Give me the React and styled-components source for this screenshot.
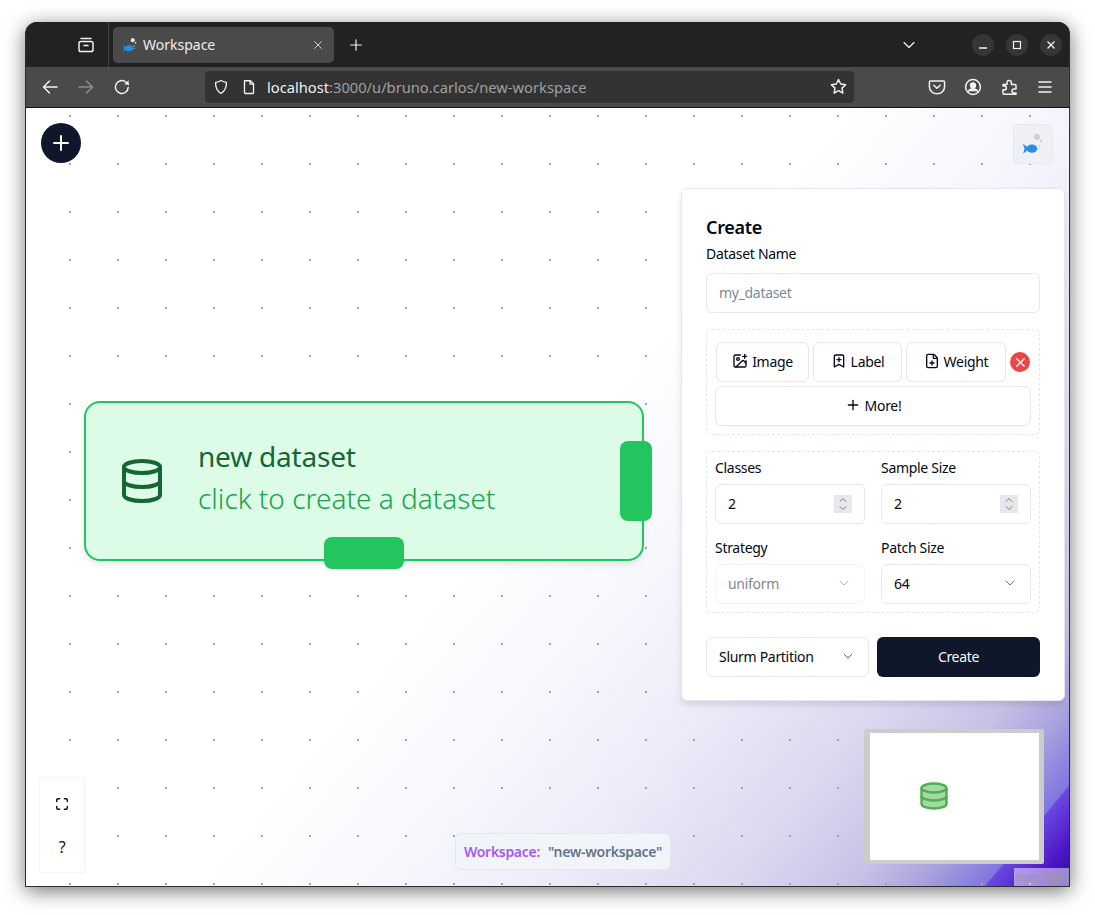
import styled, { createGlobalStyle } from "styled-components";
import {
  BookmarkPlus,
  ChevronDown,
  ChevronUp,
  Database,
  FilePlus,
  ImagePlus,
  Maximize,
  Plus,
  X,
} from "lucide-react";

const font = `"Noto Sans", "Open Sans", sans-serif`;

const GlobalStyle = createGlobalStyle`
  html, body {
    margin: 0;
    min-height: 915px;
    background: #ffffff;
    font-family: ${font};
  }
  * {
    box-sizing: border-box;
  }
  input, button {
    letter-spacing: inherit;
  }
`;

function Fish({ size = 24, bubbles = "#cbd0d8" }) {
  return (
    <svg width={size} height={size} viewBox="0 0 24 24">
      <path d="M2.500 11.500 L7 15 L7 17.500 L3 21 L4.200 16.200 Z" fill="#2a8be8" />
      <ellipse cx="11" cy="16.200" rx="5" ry="3.800" fill="#2a8be8" />
      <circle cx="15.700" cy="5.500" r="2.700" fill={bubbles} />
      <circle cx="19.400" cy="9.200" r="1.100" fill={bubbles} />
      <circle cx="17.500" cy="13.600" r="0.800" fill={bubbles} />
      <circle cx="17.500" cy="16.600" r="0.700" fill={bubbles} />
    </svg>
  );
}

function ChromeIcon({ children, size = 20 }) {
  return (
    <svg
      width={size}
      height={size}
      viewBox="0 0 20 20"
      fill="none"
      stroke="currentColor"
      strokeWidth="1.5"
      strokeLinecap="round"
      strokeLinejoin="round"
    >
      {children}
    </svg>
  );
}

function SelectBox({ value, disabled, width }) {
  return (
    <SelectField $disabled={disabled} $width={width}>
      <span>{value}</span>
      <ChevronDown size={16} strokeWidth={1.5} />
    </SelectField>
  );
}

function NumberBox({ value }) {
  return (
    <NumberWrap>
      <NumberInput type="number" defaultValue={value} />
      <Spinner>
        <ChevronUp size={12} strokeWidth={1.8} />
        <ChevronDown size={12} strokeWidth={1.8} />
      </Spinner>
    </NumberWrap>
  );
}

export default function App() {
  return (
    <>
      <GlobalStyle />
      <Window>
        <TitleBar>
          <ArchiveSlot>
            <ChromeIcon>
              <rect x="3" y="6.5" width="14" height="10" rx="1.8" />
              <path d="M5 3.5h10M8 10.5h4" />
            </ChromeIcon>
          </ArchiveSlot>
          <Tab>
            <Fish size={18} bubbles="#e4e4e4" />
            <TabTitle>Workspace</TabTitle>
            <TabClose>
              <X size={14} strokeWidth={1.4} />
            </TabClose>
          </Tab>
          <NewTab>
            <Plus size={18} strokeWidth={1.6} />
          </NewTab>
          <TabListButton>
            <ChevronDown size={20} strokeWidth={1.4} />
          </TabListButton>
          <WindowButtons>
            <WindowButton>
              <svg width="10" height="10" viewBox="0 0 10 10">
                <path d="M1 8h8" stroke="currentColor" strokeWidth="1.3" />
              </svg>
            </WindowButton>
            <WindowButton>
              <svg width="10" height="10" viewBox="0 0 10 10">
                <rect x="1.5" y="1.5" width="7" height="7" fill="none" stroke="currentColor" strokeWidth="1.2" />
              </svg>
            </WindowButton>
            <WindowButton>
              <svg width="10" height="10" viewBox="0 0 10 10">
                <path d="M1.5 1.5l7 7M8.5 1.5l-7 7" stroke="currentColor" strokeWidth="1.3" />
              </svg>
            </WindowButton>
          </WindowButtons>
        </TitleBar>

        <NavBar>
          <NavButtons>
            <NavIcon>
              <ChromeIcon>
                <path d="M17 10H3.500M9.500 4l-6 6 6 6" />
              </ChromeIcon>
            </NavIcon>
            <NavIcon $dim>
              <ChromeIcon>
                <path d="M3 10h13.500M10.500 4l6 6-6 6" />
              </ChromeIcon>
            </NavIcon>
            <NavIcon>
              <ChromeIcon>
                <path d="M16.200 10.400A6.400 6.400 0 1 1 14 5.200L16.400 7.400" />
                <path d="M16.600 3.200v4.400h-4.400" fill="currentColor" stroke="none" />
              </ChromeIcon>
            </NavIcon>
          </NavButtons>
          <UrlBar>
            <ChromeIcon size={18}>
              <path d="M10 2.800c2 1.200 4 1.800 6 2 .2 5.600-1.800 10-6 12.400-4.200-2.400-6.200-6.800-6-12.400 2-.2 4-.8 6-2z" />
            </ChromeIcon>
            <ChromeIcon size={18}>
              <path d="M5 3h6.500L15 6.500V16a1.200 1.200 0 0 1-1.200 1.200H6.200A1.200 1.200 0 0 1 5 16z" />
              <path d="M11.200 3v3.800H15" />
            </ChromeIcon>
            <UrlText>
              <UrlHost>localhost</UrlHost>:3000/u/bruno.carlos/new-workspace
            </UrlText>
            <ChromeIcon size={19}>
              <path d="M10 2.600l2.300 4.800 5.200.7-3.800 3.600.9 5.200L10 14.400l-4.600 2.500.9-5.200-3.800-3.600 5.200-.7z" />
            </ChromeIcon>
          </UrlBar>
          <ToolIcons>
            <NavIcon>
              <ChromeIcon>
                <path d="M3.400 4h13.200c.6 0 1 .4 1 1v4.400c0 4.400-3.400 7.400-7.600 7.400S2.400 13.800 2.400 9.400V5c0-.6.4-1 1-1z" />
                <path d="M6.800 8.200L10 11.200l3.200-3" />
              </ChromeIcon>
            </NavIcon>
            <NavIcon>
              <ChromeIcon>
                <circle cx="10" cy="10" r="7.400" />
                <circle cx="10" cy="8.400" r="2.400" fill="currentColor" />
                <path d="M5.200 14.200c1.200-1.800 2.800-2.400 4.800-2.400s3.600.6 4.800 2.400" fill="currentColor" />
              </ChromeIcon>
            </NavIcon>
            <ExtensionIcon>
              <ChromeIcon>
                <path d="M3 7.400h4V5.600a2.200 2.200 0 0 1 4.400 0v1.800h3.600c.6 0 1 .4 1 1V12h-2a2 2 0 0 0 0 4h2v1.200H4c-.6 0-1-.4-1-1v-3.400h1.400a1.900 1.900 0 0 0 0-3.800H3z" />
              </ChromeIcon>
            </ExtensionIcon>
            <NavIcon>
              <ChromeIcon>
                <path d="M4 5h12M4 10h12M4 15h12" />
              </ChromeIcon>
            </NavIcon>
          </ToolIcons>
        </NavBar>

        <Canvas>
          <AddButton>
            <Plus size={24} strokeWidth={2} />
          </AddButton>
          <LogoTile>
            <Fish size={26} />
          </LogoTile>

          <DatasetNode>
            <Database size={48} strokeWidth={2} color="#166534" />
            <NodeText>
              <NodeTitle>new dataset</NodeTitle>
              <NodeSubtitle>click to create a dataset</NodeSubtitle>
            </NodeText>
            <RightHandle />
            <BottomHandle />
          </DatasetNode>

          <Panel>
            <PanelTitle>Create</PanelTitle>
            <NameLabel>Dataset Name</NameLabel>
            <NameInput placeholder="my_dataset" />

            <ColumnsBox>
              <ColumnRow>
                <OutlineButton $width={93}>
                  <ImagePlus size={16} strokeWidth={2} />
                  Image
                </OutlineButton>
                <OutlineButton $width={89}>
                  <BookmarkPlus size={16} strokeWidth={2} />
                  Label
                </OutlineButton>
                <OutlineButton $width={100}>
                  <FilePlus size={16} strokeWidth={2} />
                  Weight
                </OutlineButton>
                <RemoveButton>
                  <X size={15} strokeWidth={2} />
                </RemoveButton>
              </ColumnRow>
              <MoreButton>
                <Plus size={16} strokeWidth={2} />
                More!
              </MoreButton>
            </ColumnsBox>

            <OptionsBox>
              <Option>
                <FieldLabel>Classes</FieldLabel>
                <NumberBox value={2} />
              </Option>
              <Option>
                <FieldLabel>Sample Size</FieldLabel>
                <NumberBox value={2} />
              </Option>
              <Option>
                <FieldLabel>Strategy</FieldLabel>
                <SelectBox value="uniform" disabled />
              </Option>
              <Option>
                <FieldLabel>Patch Size</FieldLabel>
                <SelectBox value="64" />
              </Option>
            </OptionsBox>

            <ActionRow>
              <SelectBox value="Slurm Partition" width={163} />
              <CreateButton>Create</CreateButton>
            </ActionRow>
          </Panel>

          <Controls>
            <ControlButton>
              <Maximize size={14} strokeWidth={2.4} color="#111111" />
            </ControlButton>
            <ControlButton>?</ControlButton>
          </Controls>

          <WorkspaceTag>
            <TagKey>Workspace:</TagKey>
            <TagValue>"new-workspace"</TagValue>
          </WorkspaceTag>

          <MiniMap>
            <MiniView>
              <svg width="30" height="32" viewBox="0 0 30 32">
                <ellipse cx="15" cy="8" rx="12.500" ry="4.500" fill="#a6d8a6" />
                <path d="M2.500 8v16c0 2.500 5.600 4.500 12.500 4.500s12.500-2 12.500-4.500V8z" fill="#a6d8a6" />
                <g fill="none" stroke="#4caf50" strokeWidth="2.400">
                  <ellipse cx="15" cy="8" rx="12.500" ry="4.500" />
                  <path d="M2.500 8v16c0 2.500 5.600 4.500 12.500 4.500s12.500-2 12.500-4.500V8" />
                  <path d="M2.500 16c0 2.500 5.600 4.500 12.500 4.500s12.500-2 12.500-4.500" />
                </g>
              </svg>
            </MiniView>
          </MiniMap>
          <Attribution>React Flow</Attribution>
        </Canvas>
      </Window>
    </>
  );
}

const Window = styled.div`
  display: flex;
  flex-direction: column;
  width: 1045px;
  height: 865px;
  margin: 22px 0 0 25px;
  overflow: hidden;
  border-radius: 12px 12px 0 0;
  border: 1px solid #2e2e2e;
  border-top: none;
  background: #222222;
  box-shadow: 0 4px 20px rgba(0, 0, 0, 0.55);
`;

const TitleBar = styled.div`
  display: flex;
  align-items: center;
  flex: 0 0 45px;
  color: #f2f2f2;
  background: #222222;
`;

const ArchiveSlot = styled.div`
  display: flex;
  align-items: center;
  justify-content: center;
  width: 83px;
  height: 45px;
  padding-left: 37px;
  border-right: 1px solid #444444;
`;

const Tab = styled.div`
  display: flex;
  align-items: center;
  width: 221px;
  height: 36px;
  margin-left: 4px;
  padding: 0 9px 0 8px;
  border-radius: 5px;
  background: #4a4a4a;
`;

const TabTitle = styled.span`
  flex: 1;
  margin-left: 4px;
  font-size: 14px;
  color: #eeeeee;
`;

const TabClose = styled.span`
  display: flex;
  color: #e8e8e8;
`;

const NewTab = styled.div`
  display: flex;
  margin-left: 13px;
`;

const TabListButton = styled.div`
  display: flex;
  margin-left: 534px;
`;

const WindowButtons = styled.div`
  display: flex;
  gap: 12px;
  margin-left: 53px;
`;

const WindowButton = styled.div`
  display: flex;
  align-items: center;
  justify-content: center;
  width: 22px;
  height: 22px;
  border-radius: 50%;
  color: #f2f2f2;
  background: #363636;
`;

const NavBar = styled.div`
  display: flex;
  align-items: center;
  flex: 0 0 41px;
  padding-bottom: 1px;
  color: #f2f2f2;
  background: #4a4a4a;
  border-bottom: 1px solid #111111;
`;

const NavButtons = styled.div`
  display: flex;
  gap: 16px;
  width: 179px;
  padding-left: 14px;
`;

const NavIcon = styled.div`
  display: flex;
  opacity: ${(props) => (props.$dim ? 0.4 : 1)};
`;

const ExtensionIcon = styled(NavIcon)`
  margin-left: 1px;
  margin-right: -1px;
`;

const UrlBar = styled.div`
  display: flex;
  align-items: center;
  gap: 10px;
  width: 649px;
  height: 32px;
  padding: 0 6px 0 7px;
  border-radius: 4px;
  background: #333333;
`;

const UrlText = styled.span`
  flex: 1;
  margin-left: -1px;
  font-size: 14.7px;
  color: #a0a0a0;
`;

const UrlHost = styled.span`
  color: #f0f0f0;
`;

const ToolIcons = styled.div`
  display: flex;
  gap: 16px;
  margin-left: 73px;
`;

const Canvas = styled.div`
  position: relative;
  flex: 1;
  color: #020817;
  letter-spacing: -0.3px;
  background-color: #ffffff;
  background-image: radial-gradient(circle, #a4a4a4 1px, transparent 1.3px),
    linear-gradient(
      130deg,
      #ffffff 48%,
      #f6f6fd 60%,
      #eceaf8 70%,
      #dcd8f0 80%,
      #c8c3e6 87%,
      #aaa4de 91%,
      #8076e0 95%,
      #6a48e0 95.1%,
      #4a14c4 98%,
      #2a1090 100%
    );
  background-size: 48px 48px, 100% 100%;
  background-position: 20px -16px, 0 0;
`;

const AddButton = styled.button`
  position: absolute;
  top: 15px;
  left: 15px;
  display: flex;
  align-items: center;
  justify-content: center;
  width: 40px;
  height: 40px;
  padding: 0;
  border: none;
  border-radius: 50%;
  color: #ffffff;
  background: #0f172a;
`;

const LogoTile = styled.div`
  position: absolute;
  top: 16px;
  left: 987px;
  display: flex;
  align-items: center;
  justify-content: center;
  width: 40px;
  height: 40px;
  border: 1px solid #e8ebf2;
  border-radius: 4px;
  background: #eef0f6;
`;

const DatasetNode = styled.div`
  position: absolute;
  top: 293px;
  left: 58px;
  display: flex;
  align-items: center;
  gap: 30px;
  width: 560px;
  height: 160px;
  padding: 0 32px;
  border: 2px solid #22c55e;
  border-radius: 16px;
  background: #dcfce7;
  box-shadow: 0 4px 6px rgba(0, 0, 0, 0.08);
`;

const NodeText = styled.div`
  display: flex;
  flex-direction: column;
  gap: 4px;
  margin-left: 2px;
  padding-bottom: 9px;
`;

const NodeTitle = styled.div`
  font-size: 28px;
  line-height: 38px;
  font-weight: 400;
  letter-spacing: -0.2px;
  color: #166534;
`;

const NodeSubtitle = styled.div`
  font-size: 28px;
  line-height: 38px;
  font-weight: 300;
  letter-spacing: 0;
  color: #16a34a;
`;

const RightHandle = styled.div`
  position: absolute;
  top: 38px;
  right: -10px;
  width: 32px;
  height: 80px;
  border-radius: 8px;
  background: #22c55e;
`;

const BottomHandle = styled.div`
  position: absolute;
  left: 238px;
  bottom: -10px;
  width: 80px;
  height: 32px;
  border-radius: 8px;
  background: #22c55e;
`;

const Panel = styled.div`
  position: absolute;
  top: 80px;
  left: 655px;
  display: flex;
  flex-direction: column;
  width: 384px;
  height: 513px;
  padding: 24px;
  border: 1px solid #e2e8f0;
  border-radius: 6px;
  background: #ffffff;
  box-shadow: 0 4px 6px rgba(0, 0, 0, 0.1);
`;

const PanelTitle = styled.div`
  font-size: 18px;
  line-height: 28px;
  font-weight: 600;
`;

const FieldLabel = styled.div`
  font-size: 14px;
  line-height: 20px;
  font-weight: 450;
`;

const NameLabel = styled(FieldLabel)`
  margin-top: 3px;
`;

const NameInput = styled.input`
  flex: 0 0 auto;
  width: 100%;
  height: 40px;
  margin-top: 9px;
  padding: 0 12px 2px;
  border: 1px solid #e2e8f0;
  border-radius: 6px;
  font-family: ${font};
  font-size: 14px;

  &::placeholder {
    color: #64748b;
    opacity: 0.85;
  }
`;

const ColumnsBox = styled.div`
  display: flex;
  flex-direction: column;
  flex: 0 0 106px;
  gap: 4px;
  margin-top: 16px;
  padding: 12px 8px 0;
  border: 1px dashed #e2e8f0;
  border-radius: 6px;
`;

const ColumnRow = styled.div`
  display: flex;
  align-items: center;
  gap: 4px;
  padding-left: 1px;
`;

const OutlineButton = styled.button`
  display: flex;
  align-items: center;
  justify-content: center;
  flex: 0 0 auto;
  gap: 4px;
  width: ${(props) => props.$width}px;
  height: 40px;
  padding: 0 0 2px;
  border: 1px solid #e2e8f0;
  border-radius: 6px;
  font-family: ${font};
  font-size: 14px;
  font-weight: 450;
  color: #020817;
  background: #ffffff;
`;

const RemoveButton = styled.button`
  display: flex;
  align-items: center;
  justify-content: center;
  width: 20px;
  height: 20px;
  padding: 0;
  border: none;
  border-radius: 50%;
  color: #ffffff;
  background: #ef4444;
`;

const MoreButton = styled(OutlineButton)`
  width: 100%;
  gap: 4px;
`;

const OptionsBox = styled.div`
  display: grid;
  grid-template-columns: 150px 150px;
  justify-content: space-between;
  row-gap: 12px;
  flex: 0 0 162px;
  margin-top: 16px;
  padding: 6px 8px;
  border: 1px dashed #e2e8f0;
  border-radius: 6px;
`;

const Option = styled.div`
  display: flex;
  flex-direction: column;
  gap: 6px;
`;

const NumberWrap = styled.div`
  position: relative;
`;

const NumberInput = styled.input`
  width: 100%;
  height: 40px;
  padding: 0 12px 2px;
  border: 1px solid #e2e8f0;
  border-radius: 6px;
  font-family: ${font};
  font-size: 14px;
  color: #020817;

  &::-webkit-inner-spin-button {
    -webkit-appearance: none;
  }
`;

const Spinner = styled.div`
  position: absolute;
  top: 11px;
  right: 13px;
  display: flex;
  flex-direction: column;
  align-items: center;
  justify-content: center;
  width: 18px;
  height: 18px;
  color: #6f6f78;
  background: #e8e8ec;

  svg {
    flex: 0 0 auto;
  }

  svg + svg {
    margin-top: -4px;
  }
`;

const SelectField = styled.div`
  display: flex;
  align-items: center;
  justify-content: space-between;
  width: ${(props) => (props.$width ? `${props.$width}px` : "100%")};
  flex: 0 0 auto;
  height: 40px;
  padding: 0 12px 2px;
  border: 1px solid #e2e8f0;
  border-radius: 6px;
  font-size: 14px;
  color: #020817;
  background: #ffffff;
  opacity: ${(props) => (props.$disabled ? 0.5 : 1)};

  svg {
    opacity: 0.6;
  }
`;

const ActionRow = styled.div`
  display: flex;
  gap: 8px;
  margin-top: 24px;
`;

const CreateButton = styled.button`
  flex: 1;
  height: 40px;
  padding: 0 0 2px;
  border: none;
  border-radius: 6px;
  font-family: ${font};
  font-size: 14px;
  font-weight: 450;
  color: #f8fafc;
  background: #0f172a;
`;

const Controls = styled.div`
  position: absolute;
  left: 14px;
  top: 670px;
  display: flex;
  flex-direction: column;
  width: 44px;
  height: 94px;
  padding: 4px 0;
  background: #ffffff;
  box-shadow: 0 0 2px rgba(0, 0, 0, 0.12);
`;

const ControlButton = styled.div`
  display: flex;
  align-items: center;
  justify-content: center;
  flex: 1;
  font-size: 16px;
  font-weight: 400;
  color: #111111;
`;

const WorkspaceTag = styled.div`
  position: absolute;
  left: 429px;
  top: 725px;
  display: flex;
  align-items: center;
  gap: 8px;
  height: 37px;
  padding: 0 8px;
  border: 1px solid #e2e8f0;
  border-radius: 6px;
  font-size: 14px;
  font-weight: 600;
  background: #f1f5f9;
`;

const TagKey = styled.span`
  color: #a855f7;
`;

const TagValue = styled.span`
  color: #64748b;
`;

const MiniMap = styled.div`
  position: absolute;
  left: 838px;
  top: 621px;
  width: 180px;
  height: 135px;
  padding: 4px 5px 4px 6px;
  background: #cccccc;
  border-radius: 2px;
`;

const MiniView = styled.div`
  display: flex;
  align-items: center;
  height: 100%;
  padding-left: 49px;
  padding-bottom: 2px;
  background: #ffffff;
`;

const Attribution = styled.div`
  position: absolute;
  right: 0;
  bottom: 0;
  padding: 2px 0 2px 2px;
  width: 55px;
  font-size: 10px;
  color: #999999;
  background: rgba(255, 255, 255, 0.5);
  white-space: nowrap;
  overflow: hidden;
`;
